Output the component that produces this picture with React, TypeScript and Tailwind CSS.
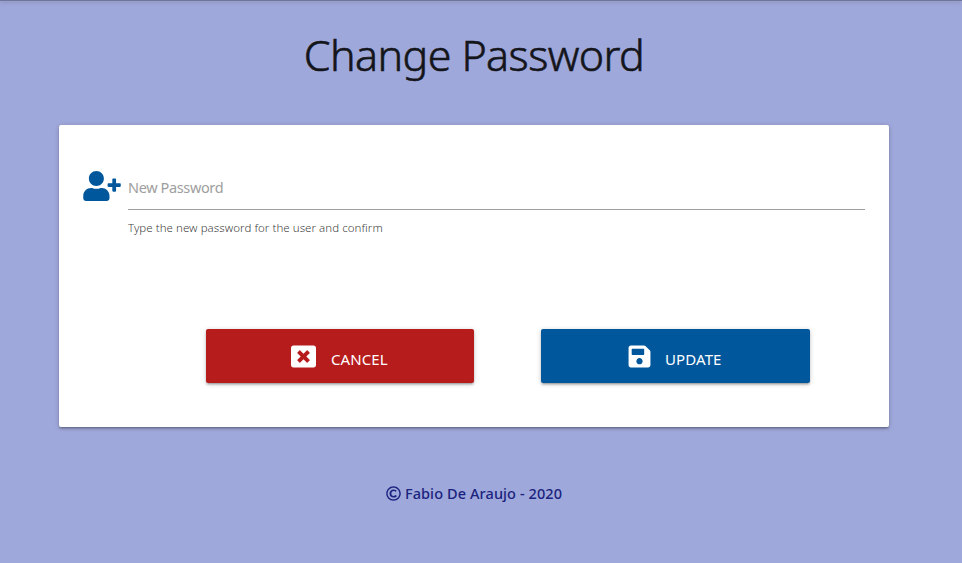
import { FaRegCopyright, FaSave, FaUserPlus, FaWindowClose } from "react-icons/fa";

const cardShadow =
  "shadow-[0_2px_2px_0_rgba(0,0,0,0.14),0_3px_1px_-2px_rgba(0,0,0,0.12),0_1px_5px_0_rgba(0,0,0,0.2)]";

export default function App() {
  return (
    <div className="h-[563px] w-[962px] overflow-hidden bg-[#9fa8da] font-['Noto_Sans','Open_Sans',sans-serif]">
      <div className="h-px w-full bg-[#70769b] shadow-[0_1px_4px_0_rgba(0,0,0,0.35)]" />
      <main className="ml-[59px] flex w-[830px] flex-col">
        <h1 className="mt-[29px] h-[95px] text-center text-[43px] leading-[50px] font-light tracking-[-0.6px] text-[#14151b] [-webkit-text-stroke:0.6px_#14151b]">
          Change Password
        </h1>
        <section className={`h-[302px] rounded-[2px] bg-white px-6 pt-[45px] ${cardShadow}`}>
          <div className="flex h-[159px]">
            <FaUserPlus className="mt-[1px] -ml-[0.5px] h-[30px] w-[38px] shrink-0 text-[#01579b]" />
            <div className="ml-[7.5px] flex-1">
              <label className="block h-10 border-b border-[#9e9e9e] pt-[7px] text-[14.5px] leading-5 tracking-[-0.37px] text-[#9e9e9e]">
                New Password
              </label>
              <span className="mt-[9px] block text-[11.5px] leading-[18px] font-light tracking-[0.05px] text-black/80">
                Type the new password for the user and confirm
              </span>
            </div>
          </div>
          <div className="ml-[123px] flex gap-[67px]">
            <button className={`flex h-[54px] w-[268px] rounded-[2px] bg-[#b71c1c] pl-[85px] text-white ${cardShadow}`}>
              <FaWindowClose className="mt-[14.5px] size-[25px]" />
              <span className="mt-[20px] ml-[15px] text-[15px] leading-5 tracking-[0.1px]">CANCEL</span>
            </button>
            <button className={`flex h-[54px] w-[269px] rounded-[2px] bg-[#01579b] pl-[86px] text-white ${cardShadow}`}>
              <FaSave className="mt-[14.5px] size-[25px]" />
              <span className="mt-[20px] ml-[13px] text-[15px] leading-5 tracking-[0.1px]">UPDATE</span>
            </button>
          </div>
        </section>
        <footer className="mt-[55px] flex justify-center text-[14.5px] leading-[22px] font-medium text-[#1a237e]">
          <FaRegCopyright className="mt-[4px] mr-1 size-[15px]" />
          <span className="tracking-[0.1px]">Fabio De Araujo - 2020</span>
        </footer>
      </main>
    </div>
  );
}
